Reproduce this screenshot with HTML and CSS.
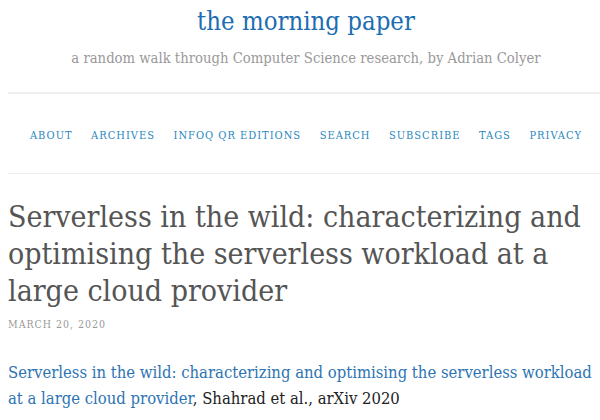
FILE: index.html
```html
<!DOCTYPE html>
<html>
<head>
<meta charset="utf-8">
<link rel="stylesheet" href="styles.css">
</head>
<body>
<div class="page">
  <header class="site-header">
    <h1 class="site-title"><a href="#">the morning paper</a></h1>
    <p class="site-desc">a random walk through Computer Science research, by Adrian Colyer</p>
  </header>
  <nav class="site-nav">
    <a href="#">About</a>
    <a href="#">Archives</a>
    <a href="#">InfoQ QR Editions</a>
    <a href="#">Search</a>
    <a href="#">Subscribe</a>
    <a href="#">Tags</a>
    <a href="#">Privacy</a>
  </nav>
  <article class="post">
    <h2 class="post-title">Serverless in the wild: characterizing and optimising the serverless workload at a large cloud provider</h2>
    <div class="post-date">March 20, 2020</div>
    <p class="post-body"><a href="#">Serverless in the wild: characterizing and optimising the serverless workload at a large cloud provider</a>, Shahrad et al., arXiv 2020</p>
  </article>
</div>
</body>
</html>
```
FILE: styles.css
```css
html, body {
  margin: 0;
  padding: 0;
  overflow: hidden;
  background: #fff;
}
body {
  font-family: "DejaVu Serif", serif;
  font-stretch: condensed;
  color: #333;
}
.page {
  width: 596px;
  margin-left: 8px;
}
a { text-decoration: none; }
.site-header {
  text-align: center;
  padding-top: 5px;
  padding-bottom: 24px;
  border-bottom: 2px solid #eee;
}
.site-title {
  margin: 0;
  font-size: 25.5px;
  font-weight: normal;
  line-height: 32px;
}
.site-title a { color: #1c6db2; }
.site-desc {
  margin: 11px 0 0;
  font-size: 14.7px;
  line-height: 20px;
  color: #999;
}
.site-nav {
  display: flex;
  justify-content: center;
  gap: 18.5px;
  padding: 35px 0 30px;
  border-bottom: 1px solid #eee;
}
.site-nav a {
  text-transform: uppercase;
  font-size: 11px;
  letter-spacing: 1px;
  line-height: 14px;
  color: #2a88c0;
}
.post-title {
  margin: 24px 0 0;
  font-size: 30px;
  font-weight: normal;
  line-height: 37px;
  color: #555;
}
.post-date {
  margin-top: 9px;
  text-transform: uppercase;
  font-size: 10.5px;
  letter-spacing: 1px;
  color: #999;
}
.post-body {
  margin: 30px 0 0;
  font-size: 16.5px;
  line-height: 26px;
  color: #222;
}
.post-body a { color: #2d74b3; }
```
